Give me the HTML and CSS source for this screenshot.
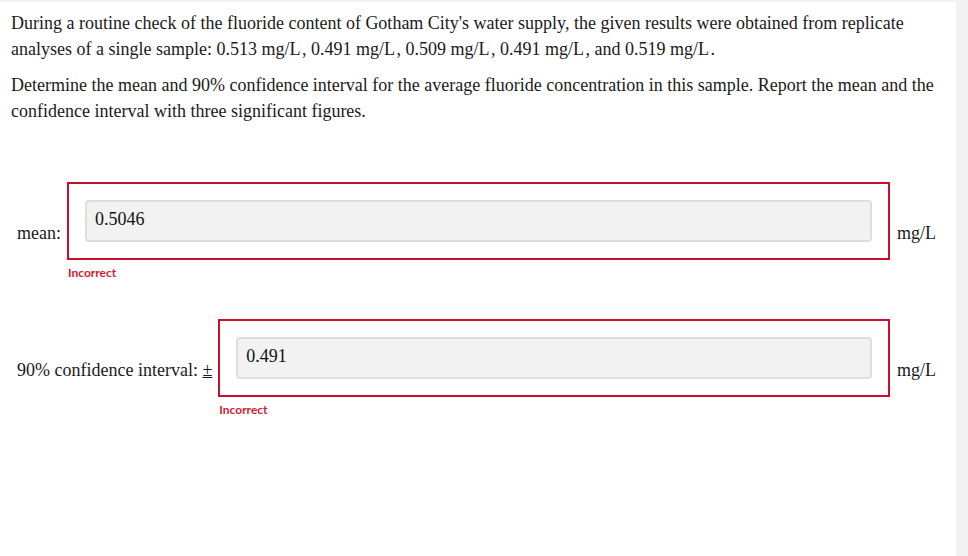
FILE: index.html
```html
<!DOCTYPE html>
<html>
<head>
<meta charset="utf-8">
<link rel="stylesheet" href="styles.css">
</head>
<body>
<div class="panel">
  <p class="q">During a routine check of the fluoride content of Gotham City's water supply, the given results were obtained from replicate analyses of a single sample: 0.513&nbsp;mg/L&#8202;, 0.491&nbsp;mg/L&#8202;, 0.509&nbsp;mg/L&#8202;, 0.491&nbsp;mg/L&#8202;, and 0.519&nbsp;mg/L&#8202;.</p>
  <p class="q">Determine the mean and 90% confidence interval for the average fluoride concentration in this sample. Report the mean and the confidence interval with three significant figures.</p>

  <div class="answer first">
    <div class="row">
      <span class="label">mean:</span>
      <div class="field">
        <div class="box"><div class="input">0.5046</div></div>
        <div class="err">Incorrect</div>
      </div>
      <span class="unit">mg/L</span>
    </div>
  </div>

  <div class="answer second">
    <div class="row">
      <span class="label">90% confidence interval: <u>±</u></span>
      <div class="field">
        <div class="box"><div class="input">0.491</div></div>
        <div class="err">Incorrect</div>
      </div>
      <span class="unit">mg/L</span>
    </div>
  </div>
</div>
</body>
</html>
```
FILE: styles.css
```css
html, body {
  margin: 0;
  padding: 0;
  background: #f2f2f2;
}
.panel {
  margin-top: 2px;
  width: 956px;
  height: 554px;
  background: #fff;
  box-sizing: border-box;
  padding: 8px 20px 0 11px;
  font-family: "Liberation Serif", "Times New Roman", serif;
  font-size: 18px;
  color: #1a1a1a;
}
.q {
  margin: 0 0 10px 0;
  line-height: 26px;
}
.answer {
  padding-left: 6px;
}
.answer.first {
  margin-top: 58px;
}
.answer.second {
  margin-top: 39px;
}
.row {
  display: flex;
  align-items: flex-start;
}
.label {
  margin-top: 39px;
  margin-right: 6px;
  white-space: nowrap;
  line-height: 24px;
}
.field {
  flex: 1;
  display: flex;
  flex-direction: column;
}
.box {
  border: 2px solid #c8102e;
  padding: 16px;
}
.input {
  height: 42px;
  box-sizing: border-box;
  background: #f2f2f2;
  border: 2px solid #dedede;
  border-radius: 4px;
  padding: 6px 8px 8px;
  line-height: 22px;
  font-size: 18px;
  color: #111;
}
.err {
  font-family: Lato, "Open Sans", sans-serif;
  font-weight: bold;
  font-size: 12px;
  color: #d7192e;
  margin-top: 6px;
  margin-left: 1px;
  line-height: 14px;
}
.unit {
  margin-top: 39px;
  margin-left: 7px;
  line-height: 24px;
}
```
